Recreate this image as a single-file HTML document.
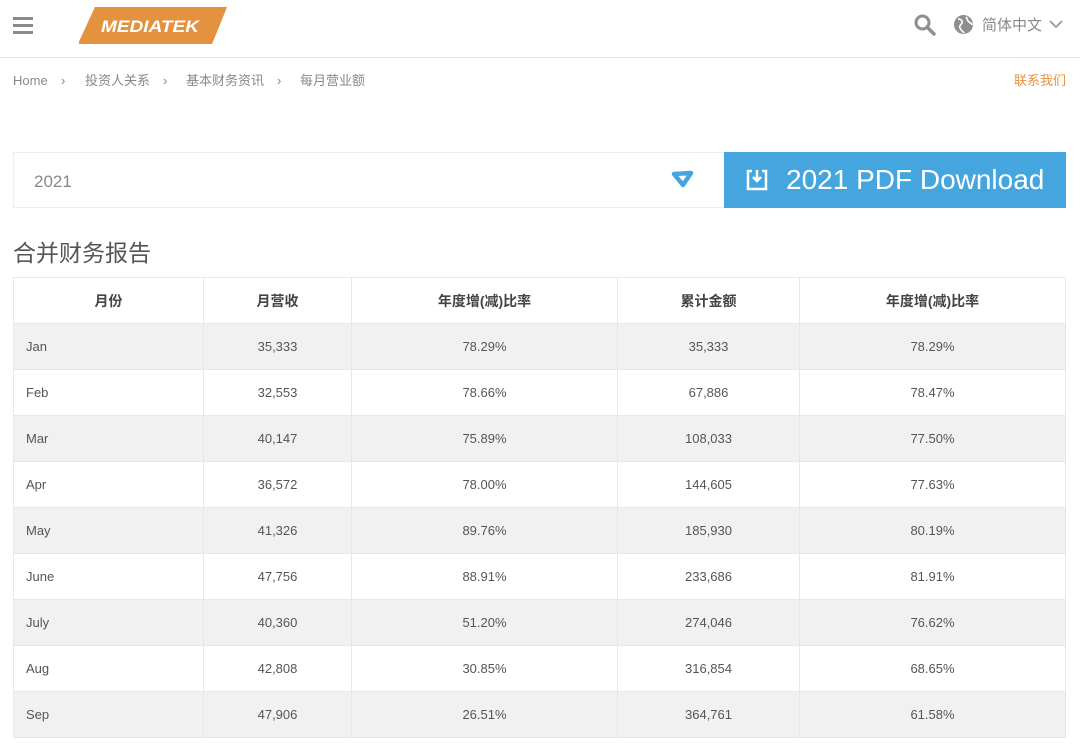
<!DOCTYPE html>
<html><head><meta charset="utf-8"><style>
*{margin:0;padding:0;box-sizing:border-box}
body{width:1080px;height:747px;overflow:hidden;background:#fff;font-family:"Liberation Sans","Noto Sans CJK SC",sans-serif;color:#555;position:relative}
.hdr{position:absolute;left:0;top:0;width:1080px;height:58px;border-bottom:1px solid #e3e3e3}
.burger{position:absolute;left:13px;top:17px;width:20px}
.burger i{display:block;height:3px;background:#8a8a8a;margin-bottom:4px}
.bc{position:absolute;top:71px;left:0;font-size:13px;color:#888;width:600px;height:20px;line-height:20px}
.bc span{position:absolute;top:0;white-space:nowrap;line-height:20px;height:20px}
.contact{position:absolute;top:71px;right:14px;font-size:13px;color:#e8913a;line-height:20px}
.sel{position:absolute;left:13px;top:152px;width:711px;height:56px;border:1px solid #eee;border-right:none}
.sel span{position:absolute;left:20px;top:19px;font-size:17px;color:#888}
.btn{position:absolute;left:724px;top:152px;width:342px;height:56px;background:#45a6df;color:#fff;font-size:28px}
.btn span{position:absolute;left:62px;top:12px}
h2{position:absolute;left:13px;top:234px;font-size:23px;font-weight:normal;color:#555}
table{position:absolute;left:13px;top:277px;width:1053px;border-collapse:collapse;font-size:13px}
td,th{border:1px solid #e8e8e8;height:46px;text-align:center;color:#555}
th{font-weight:bold;font-size:14px;color:#444}
td:first-child{text-align:left;padding-left:12px}
tr:nth-child(even) td{background:#f1f1f1}
</style></head><body>
<div class="hdr">
<div class="burger"><i></i><i></i><i></i></div>
<svg style="position:absolute;left:79px;top:7px" width="149" height="37"><path d="M17 0H147L132 37H0Z" fill="#e3923f" stroke="#e3923f" stroke-width="2" stroke-linejoin="round"/><text x="22" y="25" fill="#fff" font-family="Liberation Sans" font-weight="bold" font-style="italic" font-size="17" textLength="98" lengthAdjust="spacingAndGlyphs">MEDIATEK</text></svg>
<svg style="position:absolute;left:913px;top:13px" width="24" height="24"><circle cx="9.5" cy="9.5" r="6.5" fill="none" stroke="#8f8f8f" stroke-width="3"/><path d="M14 14L21 21" stroke="#8f8f8f" stroke-width="3.5" stroke-linecap="round"/></svg>
<svg style="position:absolute;left:953px;top:14px" width="21" height="21"><circle cx="10.5" cy="10.5" r="9.5" fill="#8f8f8f"/><path d="M5 5c3 0 5 2 4 4s-3 2-2 5 3 3 4 5M13 3c2 2 1 4 3 5s3 2 3 3" stroke="#fff" stroke-width="1.6" fill="none"/></svg>
<div style="position:absolute;left:982px;top:14px;font-size:15px;color:#888">简体中文</div>
<svg style="position:absolute;left:1049px;top:19px" width="14" height="10"><path d="M1 2L7 8L13 2" stroke="#999" stroke-width="1.8" fill="none"/></svg>
</div>
<div class="bc"><span style="left:13px">Home</span><span style="left:61px">›</span><span style="left:85px">投资人关系</span><span style="left:163px">›</span><span style="left:186px">基本财务资讯</span><span style="left:277px">›</span><span style="left:300px">每月营业额</span></div>
<div class="contact">联系我们</div>
<div class="sel"><span>2021</span>
<svg style="position:absolute;left:656px;top:16px" width="26" height="20"><path d="M4 5L21 4L13 16Z" fill="#fff" stroke="#45a6df" stroke-width="4.5" stroke-linejoin="round"/></svg></div>
<div class="btn"><svg style="position:absolute;left:21px;top:16px" width="24" height="24"><path d="M7 3H3V21H21V3H17" fill="none" stroke="#fff" stroke-width="2.5"/><path d="M12 2V13M8 9L12 13L16 9" fill="none" stroke="#fff" stroke-width="2.5"/></svg><span>2021 PDF Download</span></div>
<h2>合并财务报告</h2>
<table>
<colgroup><col style="width:190px"><col style="width:148px"><col style="width:266px"><col style="width:182px"><col></colgroup>
<tr><th>月份</th><th>月营收</th><th>年度增(减)比率</th><th>累计金额</th><th>年度增(减)比率</th></tr>
<tr><td>Jan</td><td>35,333</td><td>78.29%</td><td>35,333</td><td>78.29%</td></tr>
<tr><td>Feb</td><td>32,553</td><td>78.66%</td><td>67,886</td><td>78.47%</td></tr>
<tr><td>Mar</td><td>40,147</td><td>75.89%</td><td>108,033</td><td>77.50%</td></tr>
<tr><td>Apr</td><td>36,572</td><td>78.00%</td><td>144,605</td><td>77.63%</td></tr>
<tr><td>May</td><td>41,326</td><td>89.76%</td><td>185,930</td><td>80.19%</td></tr>
<tr><td>June</td><td>47,756</td><td>88.91%</td><td>233,686</td><td>81.91%</td></tr>
<tr><td>July</td><td>40,360</td><td>51.20%</td><td>274,046</td><td>76.62%</td></tr>
<tr><td>Aug</td><td>42,808</td><td>30.85%</td><td>316,854</td><td>68.65%</td></tr>
<tr><td>Sep</td><td>47,906</td><td>26.51%</td><td>364,761</td><td>61.58%</td></tr>
</table>
</body></html>
